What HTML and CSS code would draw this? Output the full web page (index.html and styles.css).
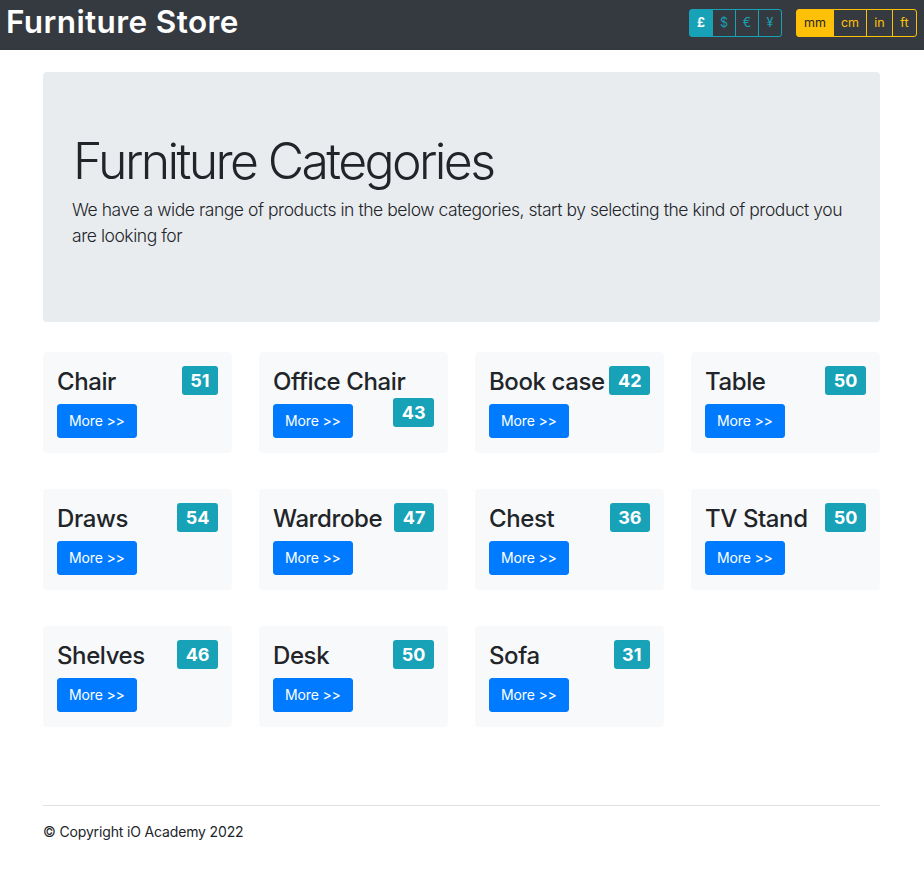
FILE: index.html
```html
<!DOCTYPE html>
<html lang="en">
<head>
<meta charset="utf-8">
<title>Furniture Store</title>
<link rel="stylesheet" href="styles.css">
</head>
<body>
<nav class="navbar">
  <h1 class="brand">Furniture Store</h1>
  <div class="toggles">
    <div class="btn-group group-info">
      <button class="tg active">£</button><button class="tg">$</button><button class="tg">€</button><button class="tg">¥</button>
    </div>
    <div class="btn-group group-warning">
      <button class="tg active">mm</button><button class="tg">cm</button><button class="tg">in</button><button class="tg">ft</button>
    </div>
  </div>
</nav>
<main class="container">
  <section class="jumbotron">
    <h2 class="display">Furniture Categories</h2>
    <p class="lead">We have a wide range of products in the below categories, start by selecting the kind of product you are looking for</p>
  </section>
  <div class="grid">
    <div class="card"><h4 class="card-title">Chair <span class="badge">51</span></h4><a class="btn" href="#">More &gt;&gt;</a></div>
    <div class="card"><h4 class="card-title">Office Chair <span class="badge">43</span></h4><a class="btn" href="#">More &gt;&gt;</a></div>
    <div class="card"><h4 class="card-title">Book case <span class="badge">42</span></h4><a class="btn" href="#">More &gt;&gt;</a></div>
    <div class="card"><h4 class="card-title">Table <span class="badge">50</span></h4><a class="btn" href="#">More &gt;&gt;</a></div>
    <div class="card"><h4 class="card-title">Draws <span class="badge">54</span></h4><a class="btn" href="#">More &gt;&gt;</a></div>
    <div class="card"><h4 class="card-title">Wardrobe <span class="badge">47</span></h4><a class="btn" href="#">More &gt;&gt;</a></div>
    <div class="card"><h4 class="card-title">Chest <span class="badge">36</span></h4><a class="btn" href="#">More &gt;&gt;</a></div>
    <div class="card"><h4 class="card-title">TV Stand <span class="badge">50</span></h4><a class="btn" href="#">More &gt;&gt;</a></div>
    <div class="card"><h4 class="card-title">Shelves <span class="badge">46</span></h4><a class="btn" href="#">More &gt;&gt;</a></div>
    <div class="card"><h4 class="card-title">Desk <span class="badge">50</span></h4><a class="btn" href="#">More &gt;&gt;</a></div>
    <div class="card"><h4 class="card-title">Sofa <span class="badge">31</span></h4><a class="btn" href="#">More &gt;&gt;</a></div>
  </div>
  <footer class="footer">
    <p>© Copyright iO Academy 2022</p>
  </footer>
</main>
</body>
</html>
```
FILE: styles.css
```css
* { box-sizing: border-box; }
body {
  margin: 0;
  font-family: Inter, "Noto Sans", "Liberation Sans", sans-serif;
  color: #212529;
  background: #fff;
  font-size: 16px;
  line-height: 1.5;
}
.navbar {
  height: 50px;
  background: #343a40;
  display: flex;
  align-items: flex-start;
  justify-content: space-between;
  padding: 0 7px 0 6px;
}
.brand {
  margin: 6px 0 0;
  color: #fff;
  font-size: 31.5px;
  font-weight: 600;
  line-height: 32px;
  letter-spacing: 0.4px;
}
.toggles {
  display: flex;
  gap: 14px;
  margin-top: 9px;
}
.btn-group {
  display: flex;
}
.tg {
  font-family: inherit;
  font-size: 12.5px;
  line-height: 18px;
  height: 28px;
  padding: 4px 0;
  margin: 0;
  text-align: center;
  background: transparent;
  border: 1px solid;
  border-radius: 0;
  cursor: pointer;
}
.tg + .tg { margin-left: -1px; }
.group-info .tg { color: #17a2b8; border-color: #17a2b8; width: 24px; }
.group-info .tg.active { background: #17a2b8; color: #fff; font-weight: 700; }
.group-warning .tg { color: #ffc107; border-color: #ffc107; }
.group-warning .tg.active { background: #ffc107; color: #212529; }
.group-warning .tg:nth-child(1) { width: 38px; }
.group-warning .tg:nth-child(2) { width: 34px; }
.group-warning .tg:nth-child(3) { width: 27px; }
.group-warning .tg:nth-child(4) { width: 25px; }
.btn-group .tg:first-child { border-radius: 3px 0 0 3px; }
.btn-group .tg:last-child { border-radius: 0 3px 3px 0; }

.container {
  width: 837px;
  margin: 0 44px 0 43px;
}
.jumbotron {
  margin-top: 22px;
  background: #e9ecef;
  border-radius: 4px;
  height: 250px;
  padding: 59px 29px 0;
}
.display {
  margin: 0 0 5.5px 1px;
  font-size: 50px;
  font-weight: 300;
  line-height: 60px;
  letter-spacing: -2.65px;
}
.lead {
  margin: 0;
  font-size: 17.5px;
  font-weight: 300;
  line-height: 26.25px;
  letter-spacing: -0.45px;
}
.grid {
  margin-top: 30px;
  display: grid;
  grid-template-columns: repeat(4, 189px);
  column-gap: 27px;
  row-gap: 36px;
}
.card {
  background: #f8f9fa;
  border-radius: 4px;
  padding: 14px 14px 15px;
  height: 101px;
}
.card-title {
  margin: 0 0 6px;
  font-size: 24px;
  font-weight: 500;
  line-height: 32px;
  letter-spacing: -0.4px;
}
.badge {
  float: right;
  background: #17a2b8;
  color: #fff;
  font-size: 18px;
  font-weight: 700;
  line-height: 1;
  padding: 5.5px 8.5px;
  border-radius: 3px;
  letter-spacing: 0;
}
.btn {
  display: inline-block;
  background: #007bff;
  color: #fff;
  text-decoration: none;
  font-size: 14px;
  line-height: 20px;
  padding: 6px 11px;
  border: 1px solid #007bff;
  border-radius: 3px;
  letter-spacing: -0.15px;
}
.footer {
  margin-top: 78px;
  border-top: 1px solid #dee2e6;
  padding-top: 15px;
}
.footer p {
  margin: 0;
  font-size: 14px;
  line-height: 21px;
  letter-spacing: -0.15px;
}
```
